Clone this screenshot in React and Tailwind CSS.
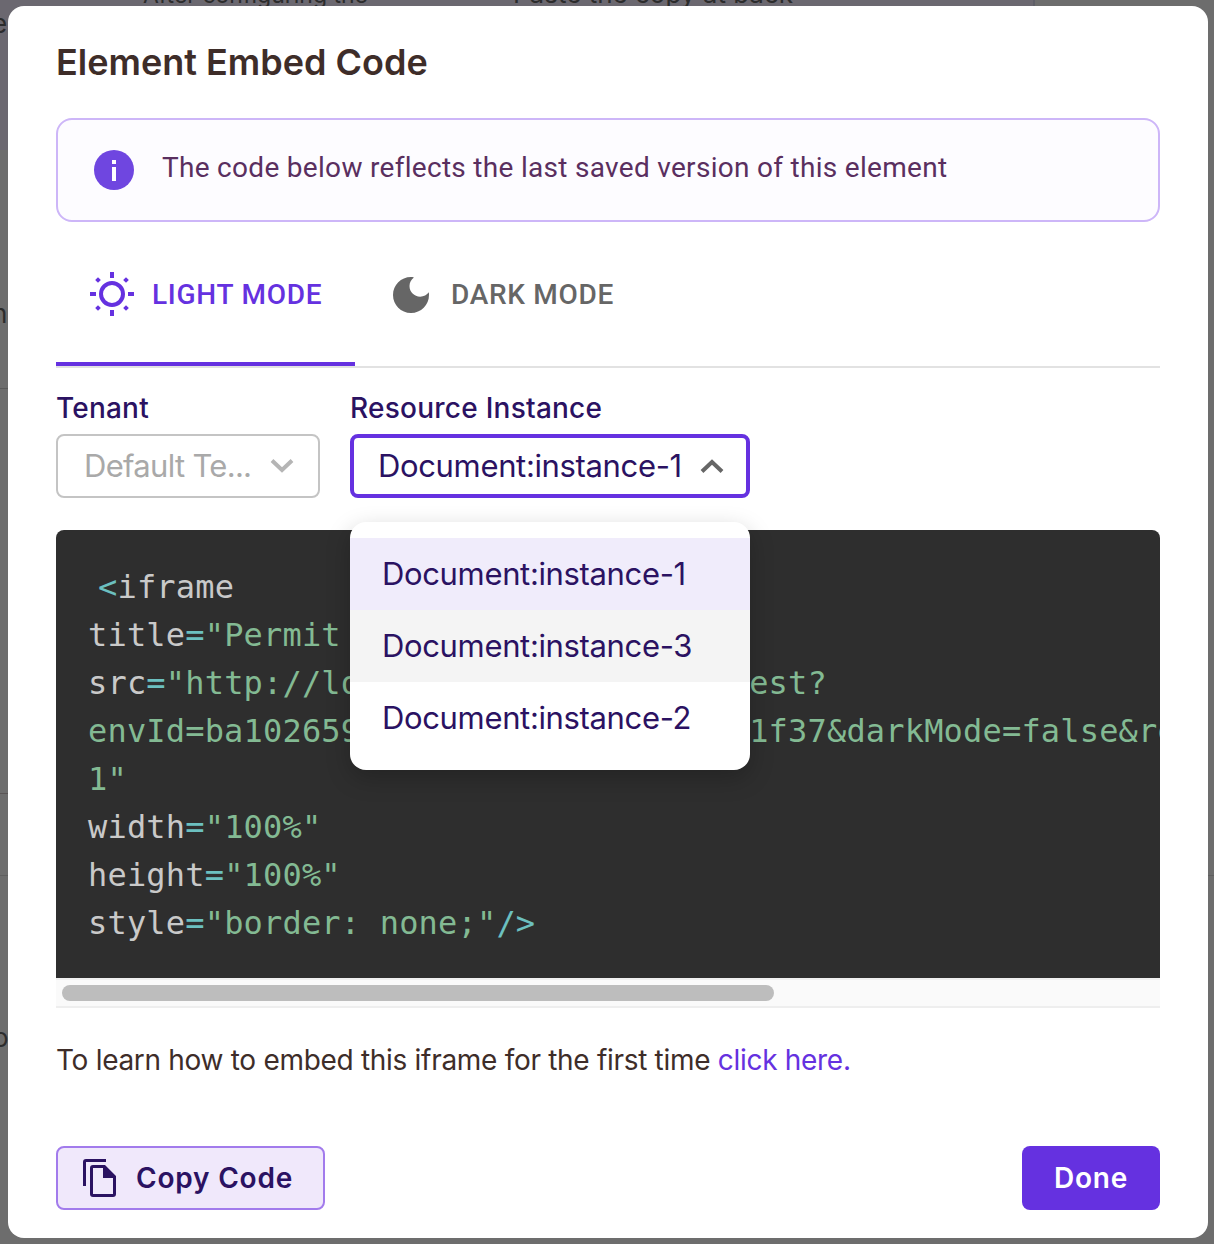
import React from "react";

const SANS = "font-['Inter','Noto_Sans',sans-serif]";
const ROBOTO = "font-['Roboto','Noto_Sans',sans-serif]";

function Sun() {
  return (
    <svg width="44" height="44" viewBox="0 0 44 44" fill="none" className="text-[#6531e0] -mt-[2px]">
      <circle cx="22" cy="22" r="11" stroke="currentColor" strokeWidth="4" />
      <rect x="20" y="0" width="4" height="6" fill="currentColor" />
      <rect x="20" y="38" width="4" height="6" fill="currentColor" />
      <rect x="0" y="20" width="6" height="4" fill="currentColor" />
      <rect x="38" y="20" width="6" height="4" fill="currentColor" />
      <rect x="6" y="6" width="4" height="4" fill="currentColor" transform="rotate(45 8 8)" />
      <rect x="34" y="6" width="4" height="4" fill="currentColor" transform="rotate(45 36 8)" />
      <rect x="6" y="34" width="4" height="4" fill="currentColor" transform="rotate(45 8 36)" />
      <rect x="34" y="34" width="4" height="4" fill="currentColor" transform="rotate(45 36 36)" />
    </svg>
  );
}

function Moon() {
  return (
    <svg width="38" height="38" viewBox="0 0 38 38" className="text-[#666666]">
      <path fill="currentColor" d="M19 1C9 1 1 9 1 19s8 18 18 18 18-8 18-18c0-1-.1-1.8-.2-2.7-1.9 2.7-5.1 4.4-8.6 4.4-5.9 0-10.7-4.8-10.7-10.7 0-3.5 1.7-6.7 4.4-8.6C21 1.1 20 1 19 1z" />
    </svg>
  );
}

function Chevron({ up, color }) {
  return (
    <svg width="24" height="14" viewBox="0 0 24 14" fill="none">
      <path d={up ? "M2 12.5 L12 3 L22 12.5" : "M2 1.5 L12 11 L22 1.5"} stroke={color} strokeWidth="4" />
    </svg>
  );
}

function CopyIcon() {
  return (
    <svg width="34" height="38" viewBox="0 0 34 38" className="text-[#2b1262]">
      <path fill="currentColor" d="M3 0h20v3H3v24H0V3a3 3 0 0 1 3-3z" />
      <path fill="currentColor" fillRule="evenodd" d="M10 6h12l11 11v18a3 3 0 0 1-3 3H10a3 3 0 0 1-3-3V9a3 3 0 0 1 3-3zm0 3v26h20V19h-10V9z" />
    </svg>
  );
}

const Attr = ({ name, children }) => (
  <div>
    <span className="text-[#c9c9c9]">{name}</span>
    <span className="text-[#6cc0c0]">=</span>
    {children}
  </div>
);
const Str = ({ children }) => <span className="text-[#83ba93]">{children}</span>;

export default function App() {
  return (
    <div className={`relative w-[1214px] h-[1244px] overflow-hidden bg-[#6d6d6d] ${SANS}`}>
      <div className="absolute left-0 top-0 w-[1033px] h-[150px] bg-[#6b6870]" />
      <div className="absolute left-[1033px] top-0 w-[2px] h-[8px] bg-[#5f5f68]" />
      <div className="absolute left-[143px] top-[-21px] text-[23px] leading-[32px] text-[#2c2c2c] whitespace-nowrap">After configuring the</div>
      <div className="absolute left-[513px] top-[-22px] text-[26px] leading-[32px] text-[#2c2c2c] whitespace-nowrap">Paste the copy at back</div>
      <div className="absolute left-[-8px] top-[8px] text-[26px] leading-[32px] text-[#2c2c2c]">e</div>
      <div className="absolute left-[-8px] top-[298px] text-[26px] leading-[32px] text-[#2c2c2c]">n</div>
      <div className="absolute left-[-7px] top-[1022px] text-[26px] leading-[32px] text-[#2c2c2c]">oo</div>
      <div className="absolute left-0 top-[388px] w-[8px] h-px bg-[#5a5a5a]" />
      <div className="absolute left-0 top-[793px] w-[8px] h-px bg-[#5a5555]" />
      <div className="absolute left-0 top-[875px] w-full h-px bg-[#5f5f5f]" />

      <div className="absolute left-[8px] top-[6px] w-[1200px] h-[1232px] bg-white rounded-[16px] pt-[32px] px-[48px] flex flex-col">
        <h2 className="text-[36px] leading-[48px] font-semibold text-[#3e2d29]">Element Embed Code</h2>

        <div className="mt-[32px] h-[104px] rounded-[16px] border-2 border-[#cdb6f8] bg-[#fdfcff] flex items-center pl-[36px] gap-[28px]">
          <div className="w-[40px] h-[40px] rounded-full bg-[#6f46e0] flex flex-col items-center justify-center gap-[3px]">
            <div className="w-[4px] h-[4px] bg-white" />
            <div className="w-[4px] h-[14px] bg-white" />
          </div>
          <span className={`${ROBOTO} text-[28px] text-[#5a2f5f] tracking-[0.3px] pb-[4px]`}>The code below reflects the last saved version of this element</span>
        </div>

        <div className="mt-[16px] relative flex h-[130px] border-b-2 border-[#e2e2e2]">
          <div className="w-[299px] flex items-center pl-[34px] gap-[18px] pb-[10px] border-b-[4px] border-[#6531e0]">
            <Sun />
            <span className={`${ROBOTO} text-[28px] font-medium text-[#6531e0] tracking-[0.75px]`}>LIGHT MODE</span>
          </div>
          <div className="flex items-center pl-[37px] gap-[21px] pb-[14px]">
            <Moon />
            <span className={`${ROBOTO} text-[28px] font-medium text-[#666666] tracking-[0.7px]`}>DARK MODE</span>
          </div>
        </div>

        <div className="mt-[20px] flex gap-[30px] relative z-10">
          <div className="w-[264px]">
            <div className="text-[28px] leading-[40px] font-medium text-[#2b1262] tracking-[0.2px]">Tenant</div>
            <div className="mt-[6px] h-[64px] rounded-[8px] border-2 border-[#c4c4c4] flex items-center justify-between pl-[26px] pr-[24px]">
              <span className="text-[31px] text-[#a9a9a9] tracking-[-0.7px]">Default Te...</span>
              <Chevron color="#b5b5b5" />
            </div>
          </div>
          <div className="w-[400px] relative">
            <div className="text-[28px] leading-[40px] font-medium text-[#2b1262] tracking-[0.25px] whitespace-nowrap">Resource Instance</div>
            <div className="mt-[6px] h-[64px] rounded-[8px] border-[4px] border-[#6531e0] flex items-center justify-between pl-[24px] pr-[22px]">
              <span className="text-[31px] text-[#2b1262] tracking-[-0.35px] whitespace-nowrap">Document:instance-1</span>
              <Chevron up color="#666666" />
            </div>
            <div className="absolute left-0 top-[134px] w-[400px] h-[248px] bg-white rounded-[16px] pt-[16px] shadow-[0_8px_24px_rgba(0,0,0,0.22)] text-[31px] text-[#2b1262] tracking-[-0.35px]">
              <div className="h-[72px] flex items-center pl-[32px] bg-[#f0ecfb]">Document:instance-1</div>
              <div className="h-[72px] flex items-center pl-[32px] bg-[#f4f4f4]">Document:instance-3</div>
              <div className="h-[72px] flex items-center pl-[32px]">Document:instance-2</div>
            </div>
          </div>
        </div>

        <div className="mt-[32px] w-[1104px]">
          <div className="h-[448px] bg-[#2e2e2e] rounded-t-[8px] pt-[33px] pl-[32px] overflow-hidden font-['DejaVu_Sans_Mono',monospace] text-[32px] tracking-[0.18px] leading-[48px] whitespace-nowrap">
            <div className="pl-[10px]">
              <span className="text-[#6cc0c0]">&lt;</span>
              <span className="text-[#c9c9c9]">iframe</span>
            </div>
            <Attr name="title"><Str>"Permit Element"</Str></Attr>
            <Attr name="src"><Str>"http://localhost:3000/embed/test?</Str></Attr>
            <div><Str>envId=ba102659c4a54c1dbe0a8ccb4a001f37&amp;darkMode=false&amp;resource=instance-</Str></div>
            <div><Str>1"</Str></div>
            <Attr name="width"><Str>"100%"</Str></Attr>
            <Attr name="height"><Str>"100%"</Str></Attr>
            <Attr name="style"><Str>"border: none;"</Str><span className="text-[#6cc0c0]">/&gt;</span></Attr>
          </div>
          <div className="h-[30px] bg-[#fafafa] border-b-2 border-[#eeeeee] border-t-2 border-t-[#f0f0f0] flex items-center pl-[6px]">
            <div className="w-[712px] h-[16px] rounded-full bg-[#bdbdbd]" />
          </div>
        </div>

        <p className="mt-[32px] text-[28px] leading-[40px] text-[#3e2d29] tracking-[-0.3px]">
          To learn how to embed this iframe for the first time <span className="text-[#6531e0]">click here.</span>
        </p>

        <div className="mt-[66px] flex justify-between">
          <div className="w-[269px] h-[64px] rounded-[8px] border-2 border-[#a27bec] bg-[#f0e8fb] flex items-center pl-[25px] gap-[19px]">
            <CopyIcon />
            <span className="text-[28px] font-semibold text-[#2b1262] tracking-[0.8px]">Copy Code</span>
          </div>
          <div className="w-[138px] h-[64px] rounded-[8px] bg-[#6531e0] flex items-center justify-center text-[28px] font-semibold text-white tracking-[0.8px]">Done</div>
        </div>
      </div>
    </div>
  );
}
